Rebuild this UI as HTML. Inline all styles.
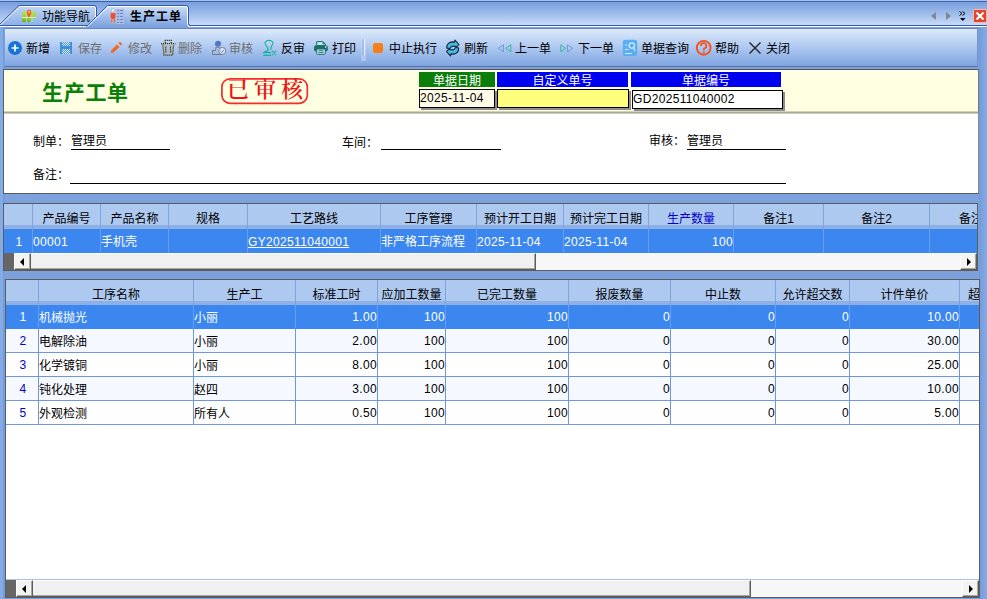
<!DOCTYPE html>
<html lang="zh-CN">
<head>
<meta charset="utf-8">
<title>生产工单</title>
<style>
*{box-sizing:border-box;margin:0;padding:0}
html,body{width:987px;height:599px;overflow:hidden}
body{background:#7ca1dd;font-family:"Liberation Sans","Noto Sans CJK SC",sans-serif;font-size:12px;color:#000;position:relative}
.abs{position:absolute}
.t{position:absolute;white-space:nowrap;line-height:14px;height:14px;margin-top:1px}
/* tab bar */
#tabbar{left:0;top:0;width:987px;height:28px;background:linear-gradient(#86a9e2 0,#8fb1e6 40%,#a9c5f0 100%)}
#topline{left:0;top:0;width:987px;height:2px;background:#3f68b3}
/* toolbar */
#toolbar{left:2px;top:29px;width:976px;height:38px;background:linear-gradient(#dceafc 0,#c1d6f5 30%,#a2bfec 62%,#7ea5e1 100%);border-bottom:1px solid #58709c;border-right:1px solid #6f93cf}
.g{color:#6e6e6e}
/* panels */
#head{left:3px;top:69px;width:976px;height:43px;background:#ffffe1;border-left:1px solid #5c5c5c;border-top:1px solid #555;border-right:1px solid #77776a;box-shadow:inset 0 1px 0 #fffffa}
#form{left:3px;top:111px;width:976px;height:83px;background:#fff;border-left:1px solid #5c5c5c;border-right:1px solid #8a8a8a;border-bottom:1px solid #5c5c5c}
#sep{left:4px;top:111px;width:974px;height:3px;background:linear-gradient(#e6e6c9,#a9a996 50%,#dcdcd4)}
.ul{position:absolute;height:1px;background:#000}
.lab{position:absolute;height:15px;line-height:19px;overflow:hidden;color:#fff;text-align:center;top:72px}
.box{position:absolute;top:89px;height:19px;border:1px solid #000;box-shadow:2px 2px 0 #8c8c8c;line-height:16px;padding-left:0;white-space:nowrap;letter-spacing:.33px}
/* grids */
.grid{position:absolute;border:1px solid #5c5c5c;background:#fff;overflow:hidden}
.hd{position:absolute;top:0;height:25px;background:linear-gradient(#aec9f0 0,#aec9f0 21px,#8eb0e5 21px,#8eb0e5 100%);border-left:1px solid #7fa2dc;text-align:center;line-height:30px;white-space:nowrap;overflow:hidden}
.c{position:absolute;height:24px;line-height:26px;white-space:nowrap;overflow:hidden;border-left:1px solid #6f97de;border-bottom:1px solid #6f97de;padding:0 1px 0 0}
.r{text-align:right}
.n{letter-spacing:.33px}
.r.n{padding-right:0}
#g2 .c.n{line-height:24px}
.sel{background:#3b87ef;color:#fff;border-left-color:#659ff3;border-bottom-color:#3b87ef}

.sb{position:absolute;left:0;height:17px;background:#f0f0f0;box-shadow:0 -1px 0 #a4c2ef}
.sbc{position:absolute;left:0;top:0;width:10px;height:17px;background:#666}
.sbb{position:absolute;top:0;width:17px;height:17px;background:#f3f3f1;border:1px solid;border-color:#fff #5c5c5c #5c5c5c #fff;box-shadow:inset -1px -1px 0 #a6a6a0}
.sbt{position:absolute;top:0;height:17px;background:#f0f0f0;border-right:1px solid #5c5c5c;border-bottom:1px solid #5c5c5c;border-top:1px solid #fff;box-shadow:inset -1px -1px 0 #a6a6a0}
.sbk{position:absolute;top:0;height:17px;background:#f7f7f7}
.al,.ar{position:absolute;top:4px;width:0;height:0;border:4px solid transparent}
.al{left:5px;border-right:4px solid #000;border-left:0}
.ar{left:6px;border-left:4px solid #000;border-right:0}
.alt{background:#f5f9ff}
</style>
</head>
<body>
<div id="tabbar" class="abs">
<svg width="987" height="29" viewBox="0 0 987 29" style="position:absolute;left:0;top:0">
<defs>
<linearGradient id="tbg" x1="0" y1="0" x2="0" y2="1"><stop offset="0" stop-color="#789fdd"/><stop offset="0.5" stop-color="#9dbbeb"/><stop offset="1" stop-color="#c8dbf8"/></linearGradient>
<linearGradient id="t1" x1="0" y1="0" x2="0" y2="1"><stop offset="0" stop-color="#c0d6f6"/><stop offset="1" stop-color="#8db0e6"/></linearGradient>
<linearGradient id="t2" x1="0" y1="0" x2="0" y2="1"><stop offset="0" stop-color="#cfe0f9"/><stop offset="0.55" stop-color="#9dbbeb"/><stop offset="1" stop-color="#7ca1dd"/></linearGradient>
</defs>
<rect x="0" y="0" width="987" height="1" fill="#a3c1ee"/>
<rect x="0" y="1" width="987" height="1" fill="#3b64ad"/>
<rect x="0" y="2" width="987" height="23" fill="url(#tbg)"/>
<rect x="0" y="27" width="987" height="2" fill="#7ca1dd"/><rect x="2" y="28" width="976" height="1" fill="#6487c6"/>
<!-- inactive tab -->
<path d="M-1 25.5 L19.5 5.5 H94 Q96.5 5.5 96.5 8 V25.5 Z" fill="url(#t1)"/>
<path d="M-1 26.5 L19.5 6.5 H93.5 Q95.5 6.5 95.5 8.5 V25" fill="none" stroke="#fff" stroke-width="1"/>
<path d="M-1.5 25.5 L19 5.5 H94 Q96.5 5.5 96.5 8 V25" fill="none" stroke="#2f5aa6" stroke-width="1"/>
<!-- base line -->
<rect x="0" y="25" width="88" height="1" fill="#2f5aa6"/><rect x="0" y="26" width="88" height="1" fill="#fff"/>
<rect x="189" y="25" width="798" height="1" fill="#2f5aa6"/><rect x="188" y="26" width="799" height="1" fill="#fff"/>
<!-- active tab -->
<path d="M86 27 L107.5 5.5 H186 Q188.5 5.5 188.5 8 V27 Z" fill="url(#t2)"/>
<path d="M87.5 26.5 L108.2 6.5 H185.5 Q187.5 6.5 187.5 8.5 V24.5 Q187.5 26.5 189.5 26.5" fill="none" stroke="#fff" stroke-width="1"/>
<path d="M86.5 26.5 L107.5 5.5 H186 Q188.5 5.5 188.5 8 V23.5 Q188.5 25.5 190.5 25.5" fill="none" stroke="#2f5aa6" stroke-width="1"/>
<!-- map icon -->
<g transform="translate(21,9)">
<linearGradient id="mg" x1="0" y1="0" x2="0" y2="1"><stop offset="0" stop-color="#b6e05a"/><stop offset=".6" stop-color="#98cc44"/><stop offset="1" stop-color="#74a830"/></linearGradient>
<rect x="1" y="2.500" width="14" height="10.500" fill="url(#mg)"/>
<rect x="9.500" y="9.500" width="5.500" height="3.500" fill="#86c8e6"/>
<rect x="1" y="8" width="14" height="1" fill="#e2eec0"/><rect x="5" y="2.500" width="1" height="10.500" fill="#cfe39a" opacity=".7"/><rect x="10.500" y="2.500" width="1" height="10.500" fill="#cfe39a" opacity=".7"/>
<path d="M8 8.600 C6.300 6 5.700 4.600 5.700 3.200 A2.300 2.400 0 0 1 10.300 3.200 C10.300 4.600 9.700 6 8 8.600 Z" fill="#f2601a"/>
<circle cx="8" cy="3" r=".9" fill="#ffd9b8"/>
</g>
<!-- person/list icon -->
<g transform="translate(109,8)">
<rect x="7" y="1" width="8" height="15" fill="#a9bfe4"/>
<g fill="#6f8cc4"><rect x="8" y="2" width="2" height="1"/><rect x="11" y="2" width="3" height="1"/><rect x="8" y="5" width="2" height="1"/><rect x="11" y="5" width="3" height="1"/><rect x="8" y="8" width="2" height="1"/><rect x="11" y="8" width="3" height="1"/><rect x="8" y="11" width="2" height="1"/><rect x="11" y="11" width="3" height="1"/><rect x="8" y="14" width="2" height="1"/><rect x="11" y="14" width="3" height="1"/></g>
<circle cx="4" cy="2.500" r="1.800" fill="#f4f4f4" stroke="#8fa6cf" stroke-width=".6"/>
<path d="M1.200 5.500 Q1.200 4.800 2 4.800 H6 Q6.800 4.800 6.800 5.500 V10 H6 V15 H4.300 V11 H3.700 V15 H2 V10 H1.200 Z" fill="#ee4e35" stroke="#c5d3ea" stroke-width=".5"/>
</g>
<!-- right controls -->
<path d="M936 12 L931 16 L936 20 Z" fill="#7f8796"/>
<path d="M946 12 L951 16 L946 20 Z" fill="#7f8796"/>
<path d="M959.5 11.500 L962 13.500 L959.5 15.500 M962.5 11.500 L965 13.500 L962.5 15.500" fill="none" stroke="#000" stroke-width="1"/>
<path d="M960 18 H965.500 L962.750 21 Z" fill="#000"/>
<rect x="973.500" y="9.500" width="13" height="13" rx="1.500" fill="#e0452a" stroke="#f7b9a8" stroke-width="1"/>
<path d="M976.500 12.500 L983.500 19.500 M983.500 12.500 L976.500 19.500" stroke="#fff" stroke-width="2.200"/>
</svg>
<div class="t" style="left:42px;top:9px">功能导航</div>
<div class="t" style="left:130px;top:9px;font-weight:bold;letter-spacing:1px">生产工单</div>
</div>
<div id="toolbar" class="abs"></div>
<svg class="abs" width="987" height="30" viewBox="0 34 987 30" style="left:0;top:34px">
<!-- add -->
<circle cx="15" cy="48" r="7" fill="#1873d6"/>
<path d="M11.500 48 H18.500 M15 44.500 V51.500" stroke="#fff" stroke-width="1.700"/>
<!-- save (disabled, dithered) -->
<defs><pattern id="dith" width="2" height="2" patternUnits="userSpaceOnUse"><rect width="2" height="2" fill="#3f8fdf"/><rect width="1" height="1" fill="#eef2f6"/><rect x="1" y="1" width="1" height="1" fill="#eef2f6"/></pattern></defs>
<rect x="60" y="42" width="12" height="12" fill="#3f8fdf"/>
<rect x="62" y="42" width="8" height="4" fill="url(#dith)"/>
<rect x="62" y="49" width="8" height="5" fill="url(#dith)"/>
<!-- pencil -->
<path d="M110.800 52.900 L111.400 50.200 L117 44.400 L119.500 46.900 L113.600 52.400 Z" fill="#ee6a22"/>
<path d="M118.400 43.100 L119.900 41.700 L122.300 44.100 L120.800 45.600 Z" fill="#ee6a22"/>
<!-- trash -->
<path d="M163 44.500 L164 55 H172.500 L173.500 44.500 Z" fill="#b9b48c" opacity=".35"/>
<g fill="none" stroke="#3d3a10" stroke-width="1.300" stroke-dasharray="1.200 .800">
<path d="M161 43.600 H175.500"/><path d="M165.300 43 V40.400 H171.200 V43"/>
<path d="M162.800 44.500 L164 55.200 H172.500 L173.700 44.500"/>
<path d="M165.800 46.500 V53 M170.500 46.500 V53"/>
</g>
<!-- approve (disabled) -->
<circle cx="218" cy="43.700" r="3" fill="#4f78c4"/>
<path d="M212.500 54.500 V50.500 H215.800 V47.300 H219.300 V48" fill="none" stroke="#767a82" stroke-width="1"/>
<path d="M212.500 54.500 H223" fill="none" stroke="#767a82" stroke-width="1"/>
<circle cx="222.300" cy="50.900" r="3.500" fill="#d5e2f6" stroke="#7d828c" stroke-width="1"/>
<path d="M220.600 51.200 L221.900 52.400 L224 49.800" fill="none" stroke="#6f97d2" stroke-width="1"/>
<!-- un-approve -->
<g fill="none" stroke="#19b39c" stroke-width="1.200" stroke-linecap="round">
<path d="M267.800 50 C268.500 48 267 46.500 265.800 45 C264 42.500 265.500 40.400 269 40.400 C272.500 40.400 274 42.500 272.300 45 C271.200 46.500 270 48 271.200 49.500"/>
<path d="M267.800 50 C267 51.500 265 51.700 264.200 52.600 H270.500" stroke-width="1.500"/>
<path d="M263.800 55.300 H270.800" stroke-width="1.300"/>
<path d="M272.300 51.200 L275.800 54.800 M275.800 51.200 L272.300 54.800" stroke-width="1.100"/>
</g>
<!-- printer -->
<path d="M316.700 45.500 V41.600 H322.800 L325.300 44 V45.500 Z" fill="#cfe3ee" stroke="#17706b" stroke-width="1" stroke-linejoin="round"/>
<path d="M322.600 41.500 L325.500 44.200 H322.600 Z" fill="#17706b"/>
<rect x="314" y="45.200" width="13.800" height="6.200" rx="2" fill="#17706b"/>
<rect x="316.700" y="49" width="8.600" height="5.300" rx=".8" fill="#cfe3ee" stroke="#17706b" stroke-width="1"/>
<path d="M318.500 50.800 H323.500 M318.500 52.600 H323.500" stroke="#17706b" stroke-width=".9"/>
<rect x="325" y="46.300" width="1.400" height="1.400" fill="#e6f2f1"/>
<!-- separator -->
<rect x="361" y="36" width="5" height="25" fill="#c9dbf6" opacity=".5"/>
<rect x="362.700" y="39.500" width="1" height="16" fill="#6a90d2"/>
<rect x="363.700" y="39.500" width="1" height="16" fill="#f6f9fe"/>
<!-- stop -->
<rect x="373" y="43" width="10" height="10" rx="2" fill="#f77f1a"/>
<!-- refresh -->
<g fill="#45bce4" stroke="#0f2438" stroke-width="1.100" stroke-linejoin="round">
<path id="rfa" d="M446.800 48.300 C446.400 44.500 449 41.900 452.500 41.900 L454.500 42.100 L455 40.100 L458.900 44.500 L456.200 47.400 L455.700 46.200 L452.800 46.100 C451.200 46.200 450.500 47 450.400 48.300 Z"/>
<path d="M446.800 48.300 C446.400 44.500 449 41.900 452.500 41.900 L454.500 42.100 L455 40.100 L458.900 44.500 L456.200 47.400 L455.700 46.200 L452.800 46.100 C451.200 46.200 450.500 47 450.400 48.300 Z" transform="rotate(180 452.700 48)"/>
</g>
<!-- prev -->
<path d="M503.500 44.800 V51.800 L498.300 48.300 Z" fill="none" stroke="#6f9fd0" stroke-width="1"/>
<path d="M510.800 44.800 V51.800 L505.800 48.300 Z" fill="none" stroke="#3bb5a5" stroke-width="1"/>
<!-- next -->
<path d="M560.800 44.800 V51.800 L565.800 48.300 Z" fill="none" stroke="#3bb5a5" stroke-width="1"/>
<path d="M567.500 44.800 V51.800 L572.800 48.300 Z" fill="none" stroke="#6f9fd0" stroke-width="1"/>
<!-- query -->
<rect x="622.800" y="39.800" width="14.400" height="16.200" rx="2.200" fill="#58aff4"/>
<circle cx="631.800" cy="45.600" r="2.700" fill="none" stroke="#dcedfc" stroke-width="1.100"/>
<path d="M633.600 47.800 L635 50.800" stroke="#dcedfc" stroke-width="1.200"/>
<path d="M625 45 H627.300 M625 49.500 H628.500 M625 53.500 H632" stroke="#d2e8fb" stroke-width="1"/>
<!-- help -->
<circle cx="703.700" cy="47.800" r="6.900" fill="none" stroke="#f4511e" stroke-width="1.900"/>
<path d="M701 46 A2.700 2.700 0 1 1 704.800 48.300 Q703.700 48.900 703.700 50.200" fill="none" stroke="#f4511e" stroke-width="1.800"/>
<rect x="702.800" y="51.400" width="1.800" height="1.800" fill="#f4511e"/>
<!-- close -->
<path d="M749.500 42.500 L760.500 53.500 M760.500 42.500 L749.500 53.500" stroke="#222" stroke-width="1.400"/>
</svg>
<div class="t" style="left:26px;top:41px">新增</div>
<div class="t g" style="left:78px;top:41px">保存</div>
<div class="t g" style="left:128px;top:41px">修改</div>
<div class="t g" style="left:178px;top:41px">删除</div>
<div class="t g" style="left:229px;top:41px">审核</div>
<div class="t" style="left:281px;top:41px">反审</div>
<div class="t" style="left:332px;top:41px">打印</div>
<div class="t" style="left:389px;top:41px">中止执行</div>
<div class="t" style="left:464px;top:41px">刷新</div>
<div class="t" style="left:515px;top:41px">上一单</div>
<div class="t" style="left:578px;top:41px">下一单</div>
<div class="t" style="left:641px;top:41px">单据查询</div>
<div class="t" style="left:715px;top:41px">帮助</div>
<div class="t" style="left:766px;top:41px">关闭</div>
<div class="abs" style="left:0;top:28px;width:5px;height:571px;background:linear-gradient(90deg,#82abe7 0,#82abe7 50%,#7299d9 70%,#7ca1dd 100%)"></div>
<div class="abs" style="left:979px;top:28px;width:8px;height:571px;background:linear-gradient(90deg,#7299d9 0,#7ca1dd 40%,#83abe7 100%)"></div>
<div id="head" class="abs"></div>
<div id="form" class="abs"></div>
<div id="sep" class="abs"></div>
<div class="abs" style="left:42px;top:80px;font-size:21px;line-height:26px;font-weight:bold;color:#0a800a;white-space:nowrap;letter-spacing:.7px;font-family:'Liberation Sans','Noto Sans CJK SC',sans-serif">生产工单</div>
<svg class="abs" width="92" height="30" viewBox="0 0 92 30" style="left:219px;top:76px"><rect x="2.900" y="2.900" width="85.400" height="24.400" rx="8" fill="none" stroke="#f42c2c" stroke-width="1.700"/></svg>
<div class="abs" style="left:227px;top:76px;font-size:22px;line-height:28px;letter-spacing:5px;font-weight:600;color:#f01414;white-space:nowrap;font-family:'Liberation Serif','Noto Serif CJK SC',serif">已审核</div>
<div class="lab" style="left:419px;width:76px;background:#0a7d0a">单据日期</div>
<div class="lab" style="left:497px;width:131px;background:#0000f0">自定义单号</div>
<div class="lab" style="left:631px;width:150px;background:#0000f0">单据编号</div>
<div class="box" style="left:419px;width:76px;background:#fffde8">2025-11-04</div>
<div class="box" style="left:497px;width:132px;background:#ffff7d"></div>
<div class="box" style="left:632px;width:151px;background:#fff;top:90px;height:19px">GD202511040002</div>
<div class="t" style="left:33px;top:134px">制单：</div>
<div class="t" style="left:71px;top:133px">管理员</div>
<div class="ul" style="left:71px;top:149px;width:99px"></div>
<div class="t" style="left:342px;top:135px">车间：</div>
<div class="ul" style="left:381px;top:149px;width:120px"></div>
<div class="t" style="left:649px;top:133px">审核：</div>
<div class="t" style="left:687px;top:133px">管理员</div>
<div class="ul" style="left:687px;top:149px;width:99px"></div>
<div class="t" style="left:33px;top:167px">备注：</div>
<div class="ul" style="left:70px;top:183px;width:716px"></div>
<div class="grid" id="g1" style="left:3px;top:203px;width:975px;height:68px">
<div class="hd" style="left:0px;width:28px;border-left:0"></div>
<div class="hd" style="left:28px;width:68px">产品编号</div>
<div class="hd" style="left:96px;width:68px">产品名称</div>
<div class="hd" style="left:164px;width:79px">规格</div>
<div class="hd" style="left:243px;width:133px">工艺路线</div>
<div class="hd" style="left:376px;width:96px">工序管理</div>
<div class="hd" style="left:472px;width:87px">预计开工日期</div>
<div class="hd" style="left:559px;width:85px">预计完工日期</div>
<div class="hd" style="left:644px;width:85px;color:#0000c8">生产数量</div>
<div class="hd" style="left:729px;width:90px">备注1</div>
<div class="hd" style="left:819px;width:106px">备注2</div>
<div class="hd" style="left:925px;width:61px;text-align:left;padding-left:29px">备注3</div>
<div class="c sel n" style="left:0px;top:25px;width:28px;border-left:0;text-align:center;padding:0 0 0 2px">1</div>
<div class="c sel n" style="left:28px;top:25px;width:68px">00001</div>
<div class="c sel" style="left:96px;top:25px;width:68px">手机壳</div>
<div class="c sel" style="left:164px;top:25px;width:79px"></div>
<div class="c sel n" style="left:243px;top:25px;width:133px"><span style="text-decoration:underline">GY202511040001</span></div>
<div class="c sel" style="left:376px;top:25px;width:96px">非严格工序流程</div>
<div class="c sel n" style="left:472px;top:25px;width:87px">2025-11-04</div>
<div class="c sel n" style="left:559px;top:25px;width:85px">2025-11-04</div>
<div class="c sel r n" style="left:644px;top:25px;width:85px">100</div>
<div class="c sel" style="left:729px;top:25px;width:90px"></div>
<div class="c sel" style="left:819px;top:25px;width:106px"></div>
<div class="c sel" style="left:925px;top:25px;width:61px"></div>
<div class="sb" style="top:49px;width:973px;box-shadow:none"><div class="sbc"></div><div class="sbb" style="left:10px"><i class="al"></i></div><div class="sbt" style="left:27px;width:505px"></div><div class="sbk" style="left:532px;width:425px"></div><div class="sbb" style="right:0"><i class="ar"></i></div></div>
</div>
<div class="grid" id="g2" style="left:5px;top:279px;width:975px;height:319px">
<div class="hd" style="left:0px;width:32px;border-left:0"></div>
<div class="hd" style="left:32px;width:155px">工序名称</div>
<div class="hd" style="left:187px;width:102px">生产工</div>
<div class="hd" style="left:289px;width:82px">标准工时</div>
<div class="hd" style="left:371px;width:68px">应加工数量</div>
<div class="hd" style="left:439px;width:123px">已完工数量</div>
<div class="hd" style="left:562px;width:102px">报废数量</div>
<div class="hd" style="left:664px;width:105px">中止数</div>
<div class="hd" style="left:769px;width:74px">允许超交数</div>
<div class="hd" style="left:843px;width:110px">计件单价</div>
<div class="hd" style="left:953px;width:41px;text-align:left;padding-left:8px">超交单价</div>
<div class="c sel n" style="left:0px;top:25px;width:32px;border-left:0;text-align:center;padding:0 0 0 2px">1</div>
<div class="c sel" style="left:32px;top:25px;width:155px">机械抛光</div>
<div class="c sel" style="left:187px;top:25px;width:102px">小丽</div>
<div class="c sel r n" style="left:289px;top:25px;width:82px">1.00</div>
<div class="c sel r n" style="left:371px;top:25px;width:68px">100</div>
<div class="c sel r n" style="left:439px;top:25px;width:123px">100</div>
<div class="c sel r n" style="left:562px;top:25px;width:102px">0</div>
<div class="c sel r n" style="left:664px;top:25px;width:105px">0</div>
<div class="c sel r n" style="left:769px;top:25px;width:74px">0</div>
<div class="c sel r n" style="left:843px;top:25px;width:110px">10.00</div>
<div class="c sel r" style="left:953px;top:25px;width:41px"></div>
<div class="c alt n" style="left:0px;top:49px;width:32px;border-left:0;text-align:center;padding:0 0 0 2px;color:#0000c8">2</div>
<div class="c alt" style="left:32px;top:49px;width:155px">电解除油</div>
<div class="c alt" style="left:187px;top:49px;width:102px">小丽</div>
<div class="c alt r n" style="left:289px;top:49px;width:82px">2.00</div>
<div class="c alt r n" style="left:371px;top:49px;width:68px">100</div>
<div class="c alt r n" style="left:439px;top:49px;width:123px">100</div>
<div class="c alt r n" style="left:562px;top:49px;width:102px">0</div>
<div class="c alt r n" style="left:664px;top:49px;width:105px">0</div>
<div class="c alt r n" style="left:769px;top:49px;width:74px">0</div>
<div class="c alt r n" style="left:843px;top:49px;width:110px">30.00</div>
<div class="c alt r" style="left:953px;top:49px;width:41px"></div>
<div class="c n" style="left:0px;top:73px;width:32px;border-left:0;text-align:center;padding:0 0 0 2px;color:#0000c8">3</div>
<div class="c" style="left:32px;top:73px;width:155px">化学镀铜</div>
<div class="c" style="left:187px;top:73px;width:102px">小丽</div>
<div class="c r n" style="left:289px;top:73px;width:82px">8.00</div>
<div class="c r n" style="left:371px;top:73px;width:68px">100</div>
<div class="c r n" style="left:439px;top:73px;width:123px">100</div>
<div class="c r n" style="left:562px;top:73px;width:102px">0</div>
<div class="c r n" style="left:664px;top:73px;width:105px">0</div>
<div class="c r n" style="left:769px;top:73px;width:74px">0</div>
<div class="c r n" style="left:843px;top:73px;width:110px">25.00</div>
<div class="c r" style="left:953px;top:73px;width:41px"></div>
<div class="c alt n" style="left:0px;top:97px;width:32px;border-left:0;text-align:center;padding:0 0 0 2px;color:#0000c8">4</div>
<div class="c alt" style="left:32px;top:97px;width:155px">钝化处理</div>
<div class="c alt" style="left:187px;top:97px;width:102px">赵四</div>
<div class="c alt r n" style="left:289px;top:97px;width:82px">3.00</div>
<div class="c alt r n" style="left:371px;top:97px;width:68px">100</div>
<div class="c alt r n" style="left:439px;top:97px;width:123px">100</div>
<div class="c alt r n" style="left:562px;top:97px;width:102px">0</div>
<div class="c alt r n" style="left:664px;top:97px;width:105px">0</div>
<div class="c alt r n" style="left:769px;top:97px;width:74px">0</div>
<div class="c alt r n" style="left:843px;top:97px;width:110px">10.00</div>
<div class="c alt r" style="left:953px;top:97px;width:41px"></div>
<div class="c n" style="left:0px;top:121px;width:32px;border-left:0;text-align:center;padding:0 0 0 2px;color:#0000c8">5</div>
<div class="c" style="left:32px;top:121px;width:155px">外观检测</div>
<div class="c" style="left:187px;top:121px;width:102px">所有人</div>
<div class="c r n" style="left:289px;top:121px;width:82px">0.50</div>
<div class="c r n" style="left:371px;top:121px;width:68px">100</div>
<div class="c r n" style="left:439px;top:121px;width:123px">100</div>
<div class="c r n" style="left:562px;top:121px;width:102px">0</div>
<div class="c r n" style="left:664px;top:121px;width:105px">0</div>
<div class="c r n" style="left:769px;top:121px;width:74px">0</div>
<div class="c r n" style="left:843px;top:121px;width:110px">5.00</div>
<div class="c r" style="left:953px;top:121px;width:41px"></div>
<div class="sb" style="top:300px;width:973px"><div class="sbc"></div><div class="sbb" style="left:10px"><i class="al"></i></div><div class="sbt" style="left:27px;width:718px"></div><div class="sbk" style="left:745px;width:212px"></div><div class="sbb" style="right:0"><i class="ar"></i></div></div>
</div>
</body>
</html>
